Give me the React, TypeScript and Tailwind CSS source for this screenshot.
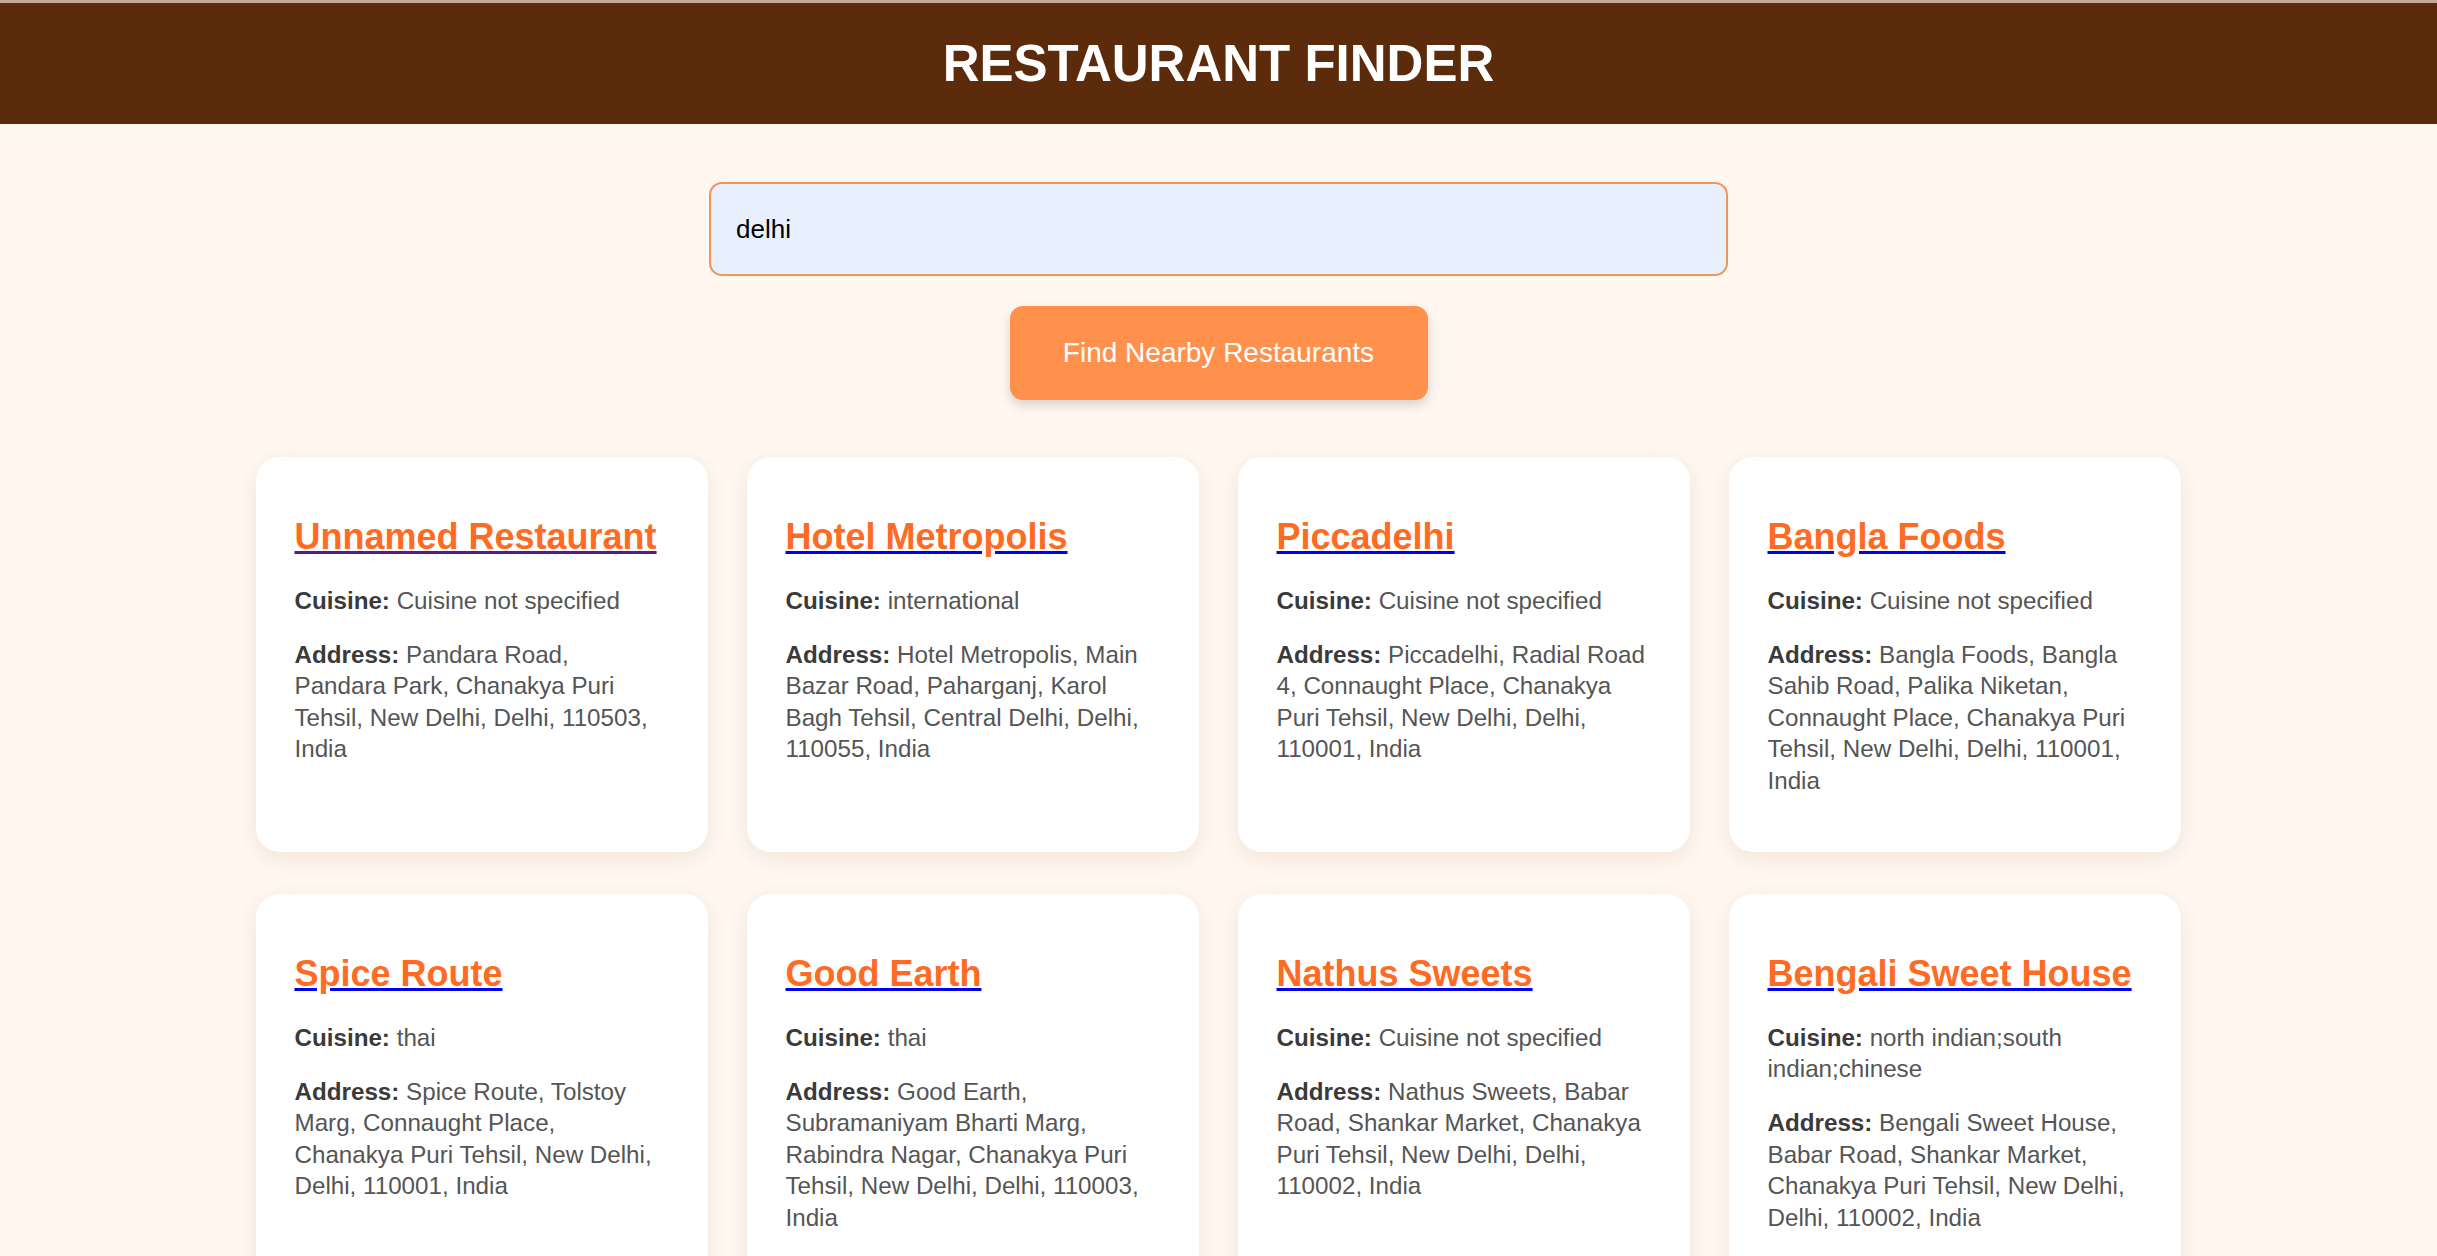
import { FC } from 'react';

interface Restaurant {
  name: string;
  cuisine: string;
  address: string;
  visited?: boolean;
}

const restaurants: Restaurant[] = [
  {
    name: 'Unnamed Restaurant',
    cuisine: 'Cuisine not specified',
    address: 'Pandara Road, Pandara Park, Chanakya Puri Tehsil, New Delhi, Delhi, 110503, India',
    visited: true,
  },
  {
    name: 'Hotel Metropolis',
    cuisine: 'international',
    address: 'Hotel Metropolis, Main Bazar Road, Paharganj, Karol Bagh Tehsil, Central Delhi, Delhi, 110055, India',
  },
  {
    name: 'Piccadelhi',
    cuisine: 'Cuisine not specified',
    address: 'Piccadelhi, Radial Road 4, Connaught Place, Chanakya Puri Tehsil, New Delhi, Delhi, 110001, India',
  },
  {
    name: 'Bangla Foods',
    cuisine: 'Cuisine not specified',
    address: 'Bangla Foods, Bangla Sahib Road, Palika Niketan, Connaught Place, Chanakya Puri Tehsil, New Delhi, Delhi, 110001, India',
  },
  {
    name: 'Spice Route',
    cuisine: 'thai',
    address: 'Spice Route, Tolstoy Marg, Connaught Place, Chanakya Puri Tehsil, New Delhi, Delhi, 110001, India',
  },
  {
    name: 'Good Earth',
    cuisine: 'thai',
    address: 'Good Earth, Subramaniyam Bharti Marg, Rabindra Nagar, Chanakya Puri Tehsil, New Delhi, Delhi, 110003, India',
  },
  {
    name: 'Nathus Sweets',
    cuisine: 'Cuisine not specified',
    address: 'Nathus Sweets, Babar Road, Shankar Market, Chanakya Puri Tehsil, New Delhi, Delhi, 110002, India',
  },
  {
    name: 'Bengali Sweet House',
    cuisine: 'north indian;south indian;chinese',
    address: 'Bengali Sweet House, Babar Road, Shankar Market, Chanakya Puri Tehsil, New Delhi, Delhi, 110002, India',
  },
];

// Single result card
const RestaurantCard: FC<{ r: Restaurant }> = ({ r }) => (
  <div className="bg-white rounded-[24px] shadow-[0_6px_22px_rgba(90,45,10,0.09)] pl-[38.5px] pr-[41.5px] pt-[59px] pb-[56px]">
    <a
      href="#"
      className={`block w-fit underline ${r.visited ? 'decoration-[#551a8b]' : 'decoration-[#0000ee]'}`}
    >
      <h3 className="text-[36px] leading-[41px] font-bold text-[#ff6b22]">{r.name}</h3>
    </a>
    <p className="mt-[28px] text-[24.2px] leading-[31.4px] text-[#555]">
      <strong className="font-bold text-[#3a3a3a]">Cuisine:</strong> {r.cuisine}
    </p>
    <p className="mt-[22.6px] text-[24.2px] leading-[31.4px] text-[#555]">
      <strong className="font-bold text-[#3a3a3a]">Address:</strong> {r.address}
    </p>
  </div>
);

export default function App() {
  return (
    <div className="h-screen overflow-hidden bg-[#fff7f0] [font-family:'Liberation_Sans',Arial,sans-serif]">
      {/* Header */}
      <header className="h-[124px] border-t-[3px] border-[#c8a69b] bg-[#5c2b0c] flex items-center justify-center">
        <h1 className="text-[51px] leading-none font-bold text-white">RESTAURANT FINDER</h1>
      </header>

      {/* Search */}
      <div className="flex flex-col items-center pt-[58px]">
        <input
          type="text"
          defaultValue="delhi"
          className="w-[1019px] h-[94px] rounded-[13px] border-2 border-[#f0955a] bg-[#e8f0fe] px-[25px] text-[26px] text-black [font-family:'Liberation_Sans',Arial,sans-serif] outline-none"
        />
        <button className="mt-[30px] w-[418px] h-[94px] rounded-[13px] bg-[#ff914d] text-white text-[28px] [font-family:'Liberation_Sans',Arial,sans-serif] shadow-[0_5px_12px_rgba(0,0,0,0.16)]">
          Find Nearby Restaurants
        </button>
      </div>

      {/* Results */}
      <div className="w-[1925px] mx-auto mt-[57px] grid grid-cols-4 gap-x-[39px] gap-y-[42px]">
        {restaurants.map(r => (
          <RestaurantCard key={r.name} r={r} />
        ))}
      </div>
    </div>
  );
}
